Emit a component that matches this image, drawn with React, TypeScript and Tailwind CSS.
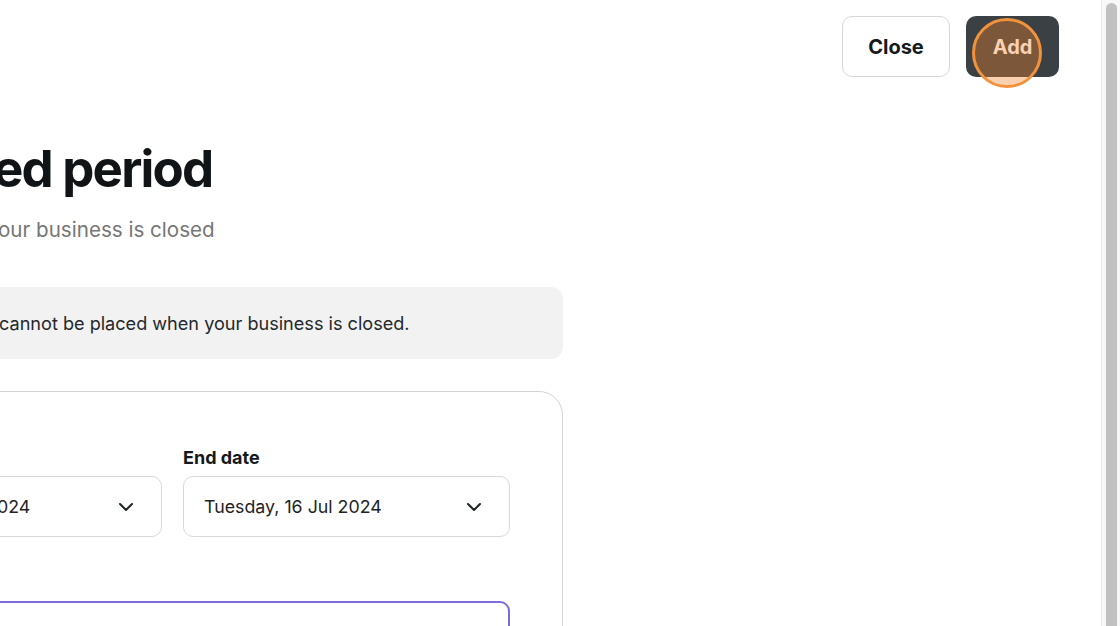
import { ChevronDown } from 'lucide-react';

const font = { fontFamily: 'Inter, "Noto Sans", sans-serif' };

function DateSelect({ value, className = '' }: { value: string; className?: string }) {
  return (
    <div
      className={`flex h-[61px] items-center justify-between rounded-[10px] border border-[#d9d9d9] bg-white pl-5 pr-[23px] ${className}`}
    >
      <span className="text-[17.8px] leading-6 text-[#1f2326]">{value}</span>
      <ChevronDown className="h-6 w-6 text-[#1f2326]" strokeWidth={2} />
    </div>
  );
}

export default function App() {
  return (
    <div className="flex h-[626px] w-[1120px] overflow-hidden bg-white" style={font}>
      <main className="relative flex min-w-0 flex-1 flex-col overflow-hidden">
        <header className="flex justify-end gap-4 pr-[42px] pt-4">
          <button className="h-[61px] w-[108px] rounded-[10px] border border-[#d6d6d6] bg-white text-[20px] font-bold text-[#15191c]">
            Close
          </button>
          <div className="relative">
            <button className="h-[61px] w-[93px] rounded-[10px] bg-[#3b4045] text-[20px] font-bold text-white">
              Add
            </button>
            <span className="absolute left-[6px] top-[2px] h-[70px] w-[70px] rounded-full border-[3px] border-[#f2923c] bg-[rgba(245,128,38,0.36)]" />
          </div>
        </header>

        <section className="mt-[62px] flex w-[563px] flex-col">
          <h1 className="-ml-[7px] text-[51px] font-bold leading-[60px] tracking-[-0.035em] text-[#111417]">
            ed period
          </h1>
          <p className="mt-[17px] -ml-[2px] text-[20.6px] leading-7 text-[#767676]">
            our business is closed
          </p>

          <div className="-ml-[218px] mt-[43px] flex h-[72px] items-center rounded-xl bg-[#f2f2f2] pl-[217px]">
            <span className="text-[18.1px] leading-6 text-[#24282b]">
              cannot be placed when your business is closed.
            </span>
          </div>

          <div className="-ml-[218px] mt-8 h-[260px] rounded-[24px] border border-[#d4d4d4] pl-[52px] pr-[52px] pt-[54px]">
            <div className="grid grid-cols-2 gap-x-[21px]">
              <div className="flex flex-col">
                <span className="mb-[6px] text-[18px] font-bold leading-6 text-[#15191c]">Start date</span>
                <DateSelect value="Monday, 15 Jul 2024" />
              </div>
              <div className="flex flex-col">
                <span className="mb-[6px] text-[18px] font-bold leading-6 text-[#15191c]">End date</span>
                <DateSelect value="Tuesday, 16 Jul 2024" />
              </div>
            </div>
            <div className="mt-16 h-[61px] rounded-[10px] border-2 border-[#7d6ae0] bg-white" />
          </div>
        </section>
      </main>

      <aside className="flex w-[19px] shrink-0 justify-center border-l border-[#ebebeb] bg-[#f7f7f7] pt-[3px]">
        <div className="h-[700px] w-[11px] rounded-full bg-[#c1c1c1]" />
      </aside>
    </div>
  );
}
